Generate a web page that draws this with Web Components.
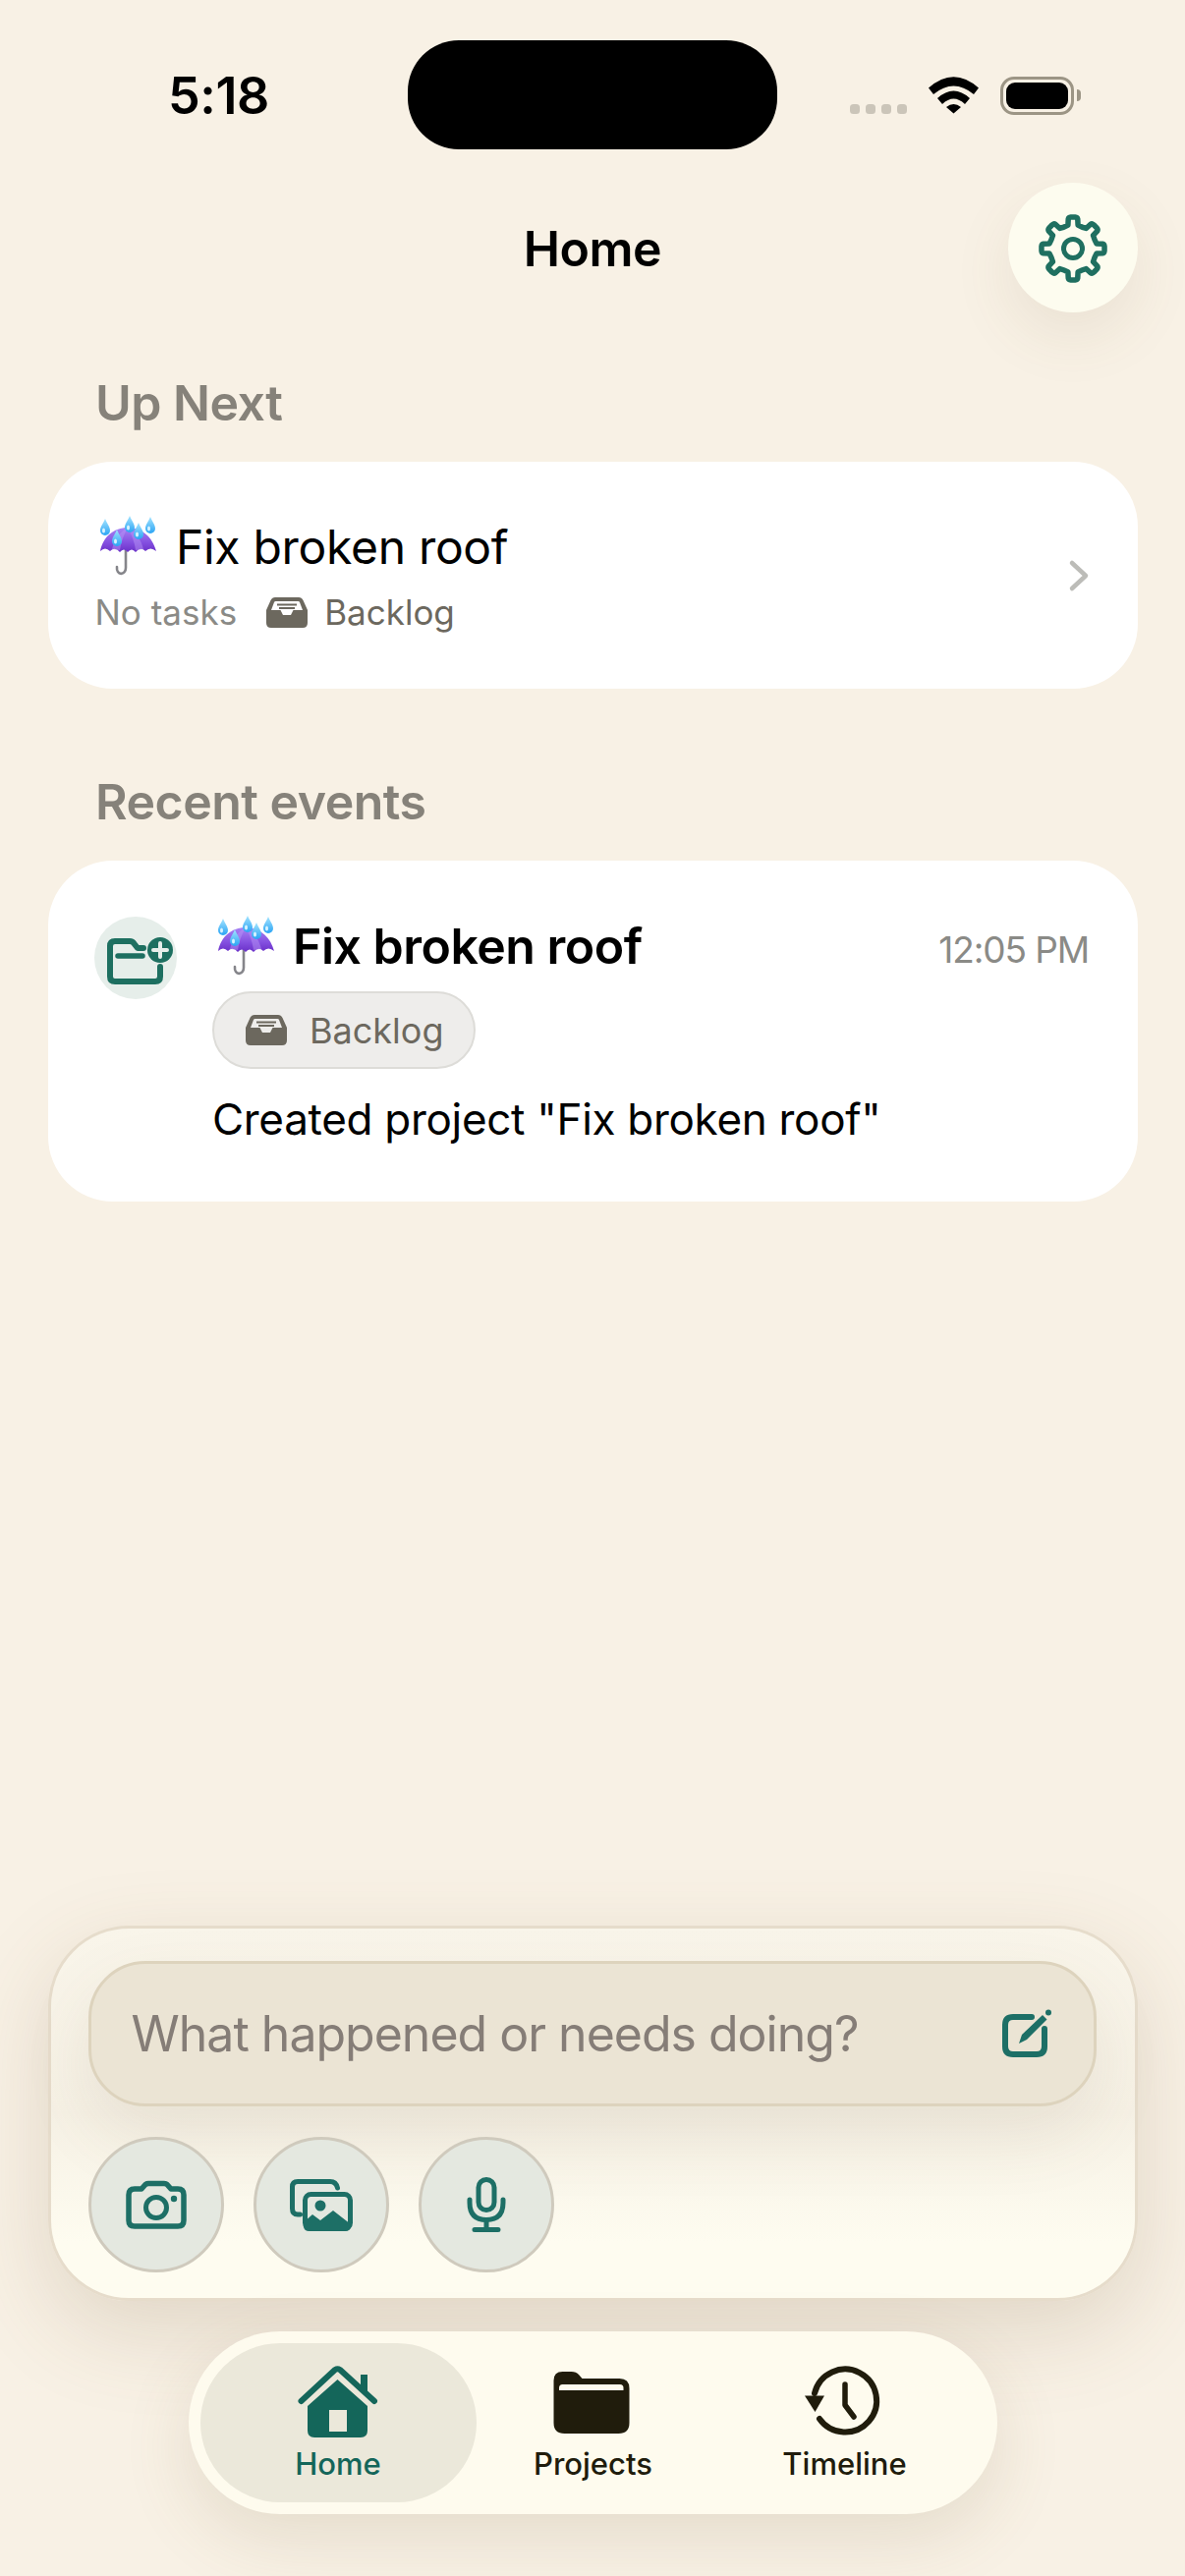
<!DOCTYPE html>
<html lang="en">
<head>
<meta charset="utf-8">
<title>Home</title>
<style>
  html, body { margin: 0; padding: 0; background: #f8f1e5; }
  body { font-family: Inter, "Noto Sans", "Liberation Sans", sans-serif; color: #000; }
</style>
</head>
<body>
<home-screen>
  <status-bar slot="status" time="5:18"></status-bar>
  <top-bar slot="top">Home</top-bar>
  <section-label slot="main">Up Next</section-label>
  <up-next-card slot="main" name="Fix broken roof" tasks="No tasks" tag="Backlog"></up-next-card>
  <section-label slot="main" class="second">Recent events</section-label>
  <event-card slot="main" name="Fix broken roof" time="12:05 PM" tag="Backlog">Created project "Fix broken roof"</event-card>
  <composer-box slot="bottom" placeholder="What happened or needs doing?"></composer-box>
  <tab-bar slot="bottom">
    <tab-item icon="home" active>Home</tab-item>
    <tab-item icon="folder">Projects</tab-item>
    <tab-item icon="history">Timeline</tab-item>
  </tab-bar>
</home-screen>

<script>
// Builds the outline of the settings gear, 8 teeth around the centre.
function gearPath() {
    const c = 35, outer = 31.5, inner = 24.5;
    const pt = (r, deg) => {
        const a = deg * Math.PI / 180;
        return (c + r * Math.cos(a)).toFixed(2) + ' ' + (c + r * Math.sin(a)).toFixed(2);
    };
    let d = '';
    for (let i = 0; i < 8; i++) {
        const a = i * 45 - 90;
        d += (i === 0 ? 'M' : 'Q' + pt(inner - 1, a - 22.5) + ' ') + pt(inner, a - 12);
        d += 'L' + pt(outer - 1, a - 9) + 'Q' + pt(outer + .6, a - 8) + ' ' + pt(outer + .6, a - 4);
        d += 'L' + pt(outer + .6, a + 4) + 'Q' + pt(outer + .6, a + 8) + ' ' + pt(outer - 1, a + 9);
        d += 'L' + pt(inner, a + 12);
    }
    return d + 'Q' + pt(inner - 1, -112.5) + ' ' + pt(inner, -102) + 'Z';
}

const drop = (x, y) => `<path d="M${x} ${y - 9}C${x + 2} ${y - 4} ${x + 5} ${y - 1} ${x + 5} ${y + 3}A5 5 0 0 1 ${x - 5} ${y + 3}C${x - 5} ${y - 1} ${x - 2} ${y - 4} ${x} ${y - 9}Z" fill="url(#d)"/>
    <ellipse cx="${x - 1.500}" cy="${y + 3}" rx="1.500" ry="2.500" fill="#d8f3ff"/>`;

// All icons live here: width, height and inner svg.
const ICONS = {
    umbrella: [58, 60, `
        <defs>
            <linearGradient id="u" x1="0" y1="0" x2="0" y2="1"><stop offset="0" stop-color="#a884f4"/><stop offset=".6" stop-color="#8450e0"/><stop offset="1" stop-color="#6a30c8"/></linearGradient>
            <linearGradient id="d" x1="0" y1="0" x2="0" y2="1"><stop offset="0" stop-color="#a4e4ff"/><stop offset="1" stop-color="#2aa4f4"/></linearGradient>
        </defs>
        <path d="M27 34V52C27 60 17 60 18 51" fill="none" stroke="#85858a" stroke-width="2.600" stroke-linecap="round"/>
        <path d="M1 35C4 20 15 11 29 11S54 20 58 35Q52 30 47 35Q42 30 37 36Q33 31 29 36Q25 31 21 36Q16 30 11 35Q6 30 1 35Z" fill="url(#u)"/>
        <path d="M13 33C15 24 21 15 29 11C25 18 22 26 21 34ZM45 33C43 24 37 15 29 11C33 18 36 26 37 34Z" fill="#b794f6" opacity=".5"/>
        ${drop(6, 11)}${drop(31, 8)}${drop(40, 15)}${drop(52, 9)}${drop(18, 22)}`],
    gear: [70, 70, `
        <path d="${gearPath()}" fill="none" stroke="currentColor" stroke-width="5.500" stroke-linejoin="round"/>
        <circle cx="35" cy="35" r="9.500" fill="none" stroke="currentColor" stroke-width="5"/>`],
    wifi: [51, 37, `
        <path d="M0 11.500Q25.500 -11 51 11.500L46 18Q25.500 1 5 18Z"/>
        <path d="M9 22Q25.500 7 42 22L37 28Q25.500 17 14 28Z"/>
        <path d="M18 31Q25.500 25 33 31L25.500 37.500Z"/>`],
    inbox: [42, 31, `
        <path fill-rule="evenodd" d="M9 0H33Q36 0 37.500 3L42 13V26Q42 31 37 31H5Q0 31 0 26V13L4.500 3Q6 0 9 0ZM9.500 4Q8.500 4 8 5L5 13H14.500L17 18H25L27.500 13H37L34 5Q33.500 4 32.500 4Z"/>
        <path d="M11 6.500H31V8.500H11ZM13 10H29V12H13Z"/>`],
    'folder-plus': [67, 48, `
        <path d="M37 11H31L27.500 6.500Q26 4 23 4H8Q3 4 3 9V40Q3 45 8 45H49Q54 45 54 40V30" fill="none" stroke="currentColor" stroke-width="6" stroke-linejoin="round" stroke-linecap="round"/>
        <path d="M11 19H36" stroke="currentColor" stroke-width="5.500" stroke-linecap="round"/>
        <circle cx="54" cy="13" r="13"/>
        <path d="M54 6V20M47 13H61" stroke="#e6eeea" stroke-width="4" stroke-linecap="round"/>`],
    edit: [50, 50, `
        <path d="M30 8H11Q3 8 3 16V38Q3 46 11 46H35Q43 46 43 38V20" fill="none" stroke="currentColor" stroke-width="6" stroke-linecap="round"/>
        <path d="M17 35L20 26L41 6L45.500 10.500L25 31Z"/>
        <circle cx="47" cy="3.500" r="3"/>`],
    camera: [62, 49, `
        <path d="M3 14Q3 8 9 8H16L20 3.500Q21.500 2.500 23 2.500H39Q41 2.500 42 3.500L46 8H53Q59 8 59 14V40Q59 46 53 46H9Q3 46 3 40Z" fill="none" stroke="currentColor" stroke-width="5.500" stroke-linejoin="round"/>
        <circle cx="31" cy="27" r="10.500" fill="none" stroke="currentColor" stroke-width="5"/>
        <circle cx="49" cy="18" r="3.200"/>`],
    images: [64, 53, `
        <path d="M10.500 36H8Q2.500 36 2.500 30V8Q2.500 2.500 8 2.500H41Q47 2.500 48.500 9" fill="none" stroke="currentColor" stroke-width="5" stroke-linecap="round"/>
        <rect x="15.500" y="15.500" width="46" height="35" rx="6" fill="none" stroke="currentColor" stroke-width="5"/>
        <circle cx="31" cy="27" r="5.500"/>
        <path d="M14 48V44L23 36L31 42L44 32L62 46V48Q62 53 56 53H20Q14 53 14 48Z"/>`],
    mic: [40, 56, `
        <rect x="12" y="2.500" width="16" height="31" rx="8" fill="none" stroke="currentColor" stroke-width="5"/>
        <path d="M3 23V26Q3 43.500 20 43.500Q37 43.500 37 26V23" fill="none" stroke="currentColor" stroke-width="5" stroke-linecap="round"/>
        <path d="M20 44V53M8 53.500H32" stroke="currentColor" stroke-width="5" stroke-linecap="round"/>`],
    home: [82, 72, `
        <path d="M64 8H71V26H64Z"/>
        <path d="M3.500 35L38 3Q40.500 1.500 43 3L78 35" fill="none" stroke="currentColor" stroke-width="6" stroke-linecap="round" stroke-linejoin="round"/>
        <path fill-rule="evenodd" d="M40.500 13L71 40V65Q71 72 64 72H17Q10 72 10 65V40ZM32 44V66H50V44Z"/>`],
    folder: [77, 63, `
        <g transform="translate(-1.500 0)"><path fill-rule="evenodd" d="M9 0H18Q23 0 25.500 3L29 7H67Q77 7 77 17V52Q77 63 66 63H11Q0 63 0 52V9Q0 0 9 0ZM9 13Q5.500 13 5.500 16.500V19H71V16.500Q71 13 67.500 13Z"/></g>`],
    history: [76, 70, `
        <g transform="translate(-3 0)">
            <path d="M10 26A32 32 0 1 1 15 52" fill="none" stroke="currentColor" stroke-width="6" stroke-linecap="round"/>
            <path d="M0 28.500H20L10.500 45Z"/>
            <path d="M41 17V38L50 50" fill="none" stroke="currentColor" stroke-width="5.500" stroke-linecap="round" stroke-linejoin="round"/>
        </g>`],
};

class AppIcon extends HTMLElement {
    constructor() {
        super();
        this.attachShadow({ mode: 'open' });
    }
    connectedCallback() {
        const [w, h, body] = ICONS[this.getAttribute('name')];
        this.shadowRoot.innerHTML = `
            <style>
                :host { display: inline-flex; flex: none; width: ${w}px; height: ${h}px; }
                svg { display: block; overflow: visible; fill: currentColor; }
            </style>
            <svg width="${w}" height="${h}" viewBox="0 0 ${w} ${h}">${body}</svg>`;
    }
}
customElements.define('app-icon', AppIcon);

// Frame of the whole screen: status, top bar, scrolling part, bottom part.
class HomeScreen extends HTMLElement {
    constructor() {
        super();
        this.attachShadow({ mode: 'open' });
    }
    connectedCallback() {
        this.shadowRoot.innerHTML = `
            <style>
                :host { display: flex; flex-direction: column; width: 1206px; height: 2622px; overflow: hidden;
                        background: #f8f1e5; box-sizing: border-box; padding-bottom: 63px; }
                main { flex: 1; display: flex; flex-direction: column; padding: 0 48px 0 49px; }
                footer { display: flex; flex-direction: column; align-items: center; gap: 31px; }
            </style>
            <slot name="status"></slot>
            <slot name="top"></slot>
            <main><slot name="main"></slot></main>
            <footer><slot name="bottom"></slot></footer>`;
    }
}
customElements.define('home-screen', HomeScreen);

class StatusBar extends HTMLElement {
    constructor() {
        super();
        this.attachShadow({ mode: 'open' });
    }
    connectedCallback() {
        this.shadowRoot.innerHTML = `
            <style>
                :host { display: grid; grid-template-columns: 1fr 376px 1fr; height: 186px; box-sizing: border-box; padding-top: 41px; }
                .time { font-size: 52px; font-weight: 600; line-height: 113px; padding-left: 171px; letter-spacing: -.4px; }
                .island { height: 111px; border-radius: 52px; background: #000; }
                .right { display: flex; align-items: flex-start; padding: 37px 0 0 74px; }
                .dots { display: flex; gap: 6px; margin: 28px 22px 0 0; }
                .dots i { width: 10px; height: 10px; border-radius: 3.5px; background: #cbc5b9; }
                .battery { margin-left: 22px; width: 75px; height: 39px; box-sizing: border-box; border: 3px solid #9c9585;
                           border-radius: 14px; padding: 3px; position: relative; }
                .battery i { display: block; height: 100%; background: #000; border-radius: 9px; }
                .battery::after { content: ''; position: absolute; right: -10px; top: 10px; width: 4px; height: 12px;
                                  background: #9c9585; border-radius: 0 6px 6px 0; }
            </style>
            <div class="time">${this.getAttribute('time')}</div>
            <div class="island"></div>
            <div class="right">
                <div class="dots"><i></i><i></i><i></i><i></i></div>
                <app-icon name="wifi"></app-icon>
                <div class="battery"><i></i></div>
            </div>`;
    }
}
customElements.define('status-bar', StatusBar);

class TopBar extends HTMLElement {
    constructor() {
        super();
        this.attachShadow({ mode: 'open' });
    }
    connectedCallback() {
        this.shadowRoot.innerHTML = `
            <style>
                :host { display: grid; grid-template-columns: 1fr auto 1fr; align-items: center; height: 132px; padding: 0 48px; }
                h1 { margin: 2px 0 0; font-size: 50px; font-weight: 600; line-height: 130px; letter-spacing: -.5px; }
                button { justify-self: end; width: 132px; height: 132px; border: 0; border-radius: 50%; background: #fdfcef; color: #1f6f60;
                         display: flex; align-items: center; justify-content: center; padding: 2px 0 0;
                         box-shadow: 0 24px 60px rgba(120, 100, 60, .10); }
            </style>
            <span></span>
            <h1><slot></slot></h1>
            <button><app-icon name="gear"></app-icon></button>`;
    }
}
customElements.define('top-bar', TopBar);

class SectionLabel extends HTMLElement {
    constructor() {
        super();
        this.attachShadow({ mode: 'open' });
    }
    connectedCallback() {
        this.shadowRoot.innerHTML = `
            <style>
                :host { display: block; padding: 66px 0 0 48px; height: 86px; font-size: 50px; line-height: 52px; font-weight: 600; color: #86827a; letter-spacing: -.5px; }
                :host(.second) { padding-top: 89px; height: 86px; }
            </style>
            <slot></slot>`;
    }
}
customElements.define('section-label', SectionLabel);

class TagLabel extends HTMLElement {
    constructor() {
        super();
        this.attachShadow({ mode: 'open' });
    }
    connectedCallback() {
        this.shadowRoot.innerHTML = `
            <style>
                :host { display: inline-flex; align-items: center; gap: 17px; color: #6c685e; font-size: 35px; line-height: 44px; }
                :host([pill]) { gap: 23px; font-size: 36px; width: 268px; height: 79px; box-sizing: border-box; padding-left: 32px;
                                border: 2px solid #dddcd8; border-radius: 40px; background: #eeedeb; }
            </style>
            <app-icon name="inbox"></app-icon>
            <slot></slot>`;
    }
}
customElements.define('tag-label', TagLabel);

class UpNextCard extends HTMLElement {
    constructor() {
        super();
        this.attachShadow({ mode: 'open' });
    }
    connectedCallback() {
        this.shadowRoot.innerHTML = `
            <style>
                :host { display: flex; align-items: center; justify-content: space-between; height: 231px; box-sizing: border-box;
                        padding: 0 48px 0 49px; background: #fff; border-radius: 66px; }
                .name { display: flex; align-items: center; gap: 20px; font-size: 48px; line-height: 60px; padding-left: 3px; letter-spacing: -.3px; }
                .name span { margin-top: 2px; }
                .meta { display: flex; align-items: center; gap: 30px; font-size: 35px; line-height: 44px; color: #8a8a86; margin: 14px 0 1px -1.5px; }
                svg { display: block; }
            </style>
            <div>
                <div class="name"><app-icon name="umbrella"></app-icon><span>${this.getAttribute('name')}</span></div>
                <div class="meta"><span>${this.getAttribute('tasks')}</span><tag-label>${this.getAttribute('tag')}</tag-label></div>
            </div>
            <svg width="24" height="34" viewBox="0 0 24 34"><path d="M5 4L19 17L5 30" fill="none" stroke="#bcbcb8" stroke-width="4.500" stroke-linecap="round" stroke-linejoin="round"/></svg>`;
    }
}
customElements.define('up-next-card', UpNextCard);

class EventCard extends HTMLElement {
    constructor() {
        super();
        this.attachShadow({ mode: 'open' });
    }
    connectedCallback() {
        this.shadowRoot.innerHTML = `
            <style>
                :host { display: flex; gap: 36px; height: 347px; box-sizing: border-box; padding: 57px 50px 0 47px; background: #fff; border-radius: 66px; }
                .badge { flex: none; width: 84px; height: 84px; border-radius: 50%; background: #e6eeea; color: #1d6f60; display: flex; padding: 21px 0 0 13px; box-sizing: border-box; }
                .body { flex: 1; min-width: 0; }
                .head { display: flex; align-items: center; justify-content: space-between; height: 59px; }
                .name { display: flex; align-items: center; gap: 19px; padding-left: 5px; font-size: 50px; font-weight: 600; letter-spacing: -.5px; }
                .time { font-size: 37px; color: #8a8a86; margin-top: 8px; letter-spacing: -1.1px; }
                tag-label { margin-top: 17px; }
                p { margin: 19px 0 0; font-size: 44px; line-height: 64px; letter-spacing: -.3px; }
            </style>
            <div class="badge"><app-icon name="folder-plus"></app-icon></div>
            <div class="body">
                <div class="head">
                    <div class="name"><app-icon name="umbrella"></app-icon><span>${this.getAttribute('name')}</span></div>
                    <div class="time">${this.getAttribute('time')}</div>
                </div>
                <tag-label pill>${this.getAttribute('tag')}</tag-label>
                <p><slot></slot></p>
            </div>`;
    }
}
customElements.define('event-card', EventCard);

class RoundAction extends HTMLElement {
    constructor() {
        super();
        this.attachShadow({ mode: 'open' });
    }
    connectedCallback() {
        this.shadowRoot.innerHTML = `
            <style>
                :host { display: flex; align-items: center; justify-content: center; width: 138px; height: 138px; box-sizing: border-box;
                        border: 3px solid #cfcabd; border-radius: 50%; background: #e4e8e0; color: #1d6f66; }
            </style>
            <app-icon name="${this.getAttribute('icon')}"></app-icon>`;
    }
}
customElements.define('round-action', RoundAction);

class ComposerBox extends HTMLElement {
    constructor() {
        super();
        this.attachShadow({ mode: 'open' });
    }
    connectedCallback() {
        this.shadowRoot.innerHTML = `
            <style>
                :host { display: block; width: 1109px; height: 382px; box-sizing: border-box; padding: 33px 39px 0 38px;
                        border: 3px solid #e6dccb; border-radius: 82px;
                        background: linear-gradient(#f9f5ea 0%, #f6f1e5 50%, #fefcf0 85%);
                        box-shadow: 0 30px 90px rgba(110, 85, 50, .17); }
                .field { display: flex; align-items: center; justify-content: space-between; height: 148px; box-sizing: border-box;
                         padding: 0 43px 0 41px; border: 3px solid #ddd3bd; border-radius: 58px; background: #ebe4d4;
                         box-shadow: 0 30px 70px rgba(110, 90, 60, .10); }
                .hint { font-size: 50px; color: #857d77; letter-spacing: -1px; }
                app-icon { color: #1d6f66; }
                .actions { display: flex; gap: 30px; margin-top: 31px; }
            </style>
            <div class="field"><span class="hint">${this.getAttribute('placeholder')}</span><app-icon name="edit"></app-icon></div>
            <div class="actions">
                <round-action icon="camera"></round-action>
                <round-action icon="images"></round-action>
                <round-action icon="mic"></round-action>
            </div>`;
    }
}
customElements.define('composer-box', ComposerBox);

class TabBar extends HTMLElement {
    constructor() {
        super();
        this.attachShadow({ mode: 'open' });
    }
    connectedCallback() {
        this.shadowRoot.innerHTML = `
            <style>
                :host { display: grid; grid-template-columns: 281px 238px 274px; width: 823px; height: 186px; box-sizing: border-box; padding: 12px;
                        border-radius: 93px; background: #fefbee; box-shadow: 0 24px 70px rgba(110, 90, 50, .14); }
            </style>
            <slot></slot>`;
    }
}
customElements.define('tab-bar', TabBar);

class TabItem extends HTMLElement {
    constructor() {
        super();
        this.attachShadow({ mode: 'open' });
    }
    connectedCallback() {
        this.shadowRoot.innerHTML = `
            <style>
                :host { display: flex; flex-direction: column; align-items: center; border-radius: 81px; color: #201c0c;
                        font-size: 31px; font-weight: 500; line-height: 38px; }
                :host([active]) { background: #ebe8da; color: #14665a; }
                .slot { height: 104px; display: flex; align-items: center; justify-content: center; padding-top: 16px; box-sizing: border-box; }
            </style>
            <div class="slot"><app-icon name="${this.getAttribute('icon')}"></app-icon></div>
            <div><slot></slot></div>`;
    }
}
customElements.define('tab-item', TabItem);
</script>
</body>
</html>
